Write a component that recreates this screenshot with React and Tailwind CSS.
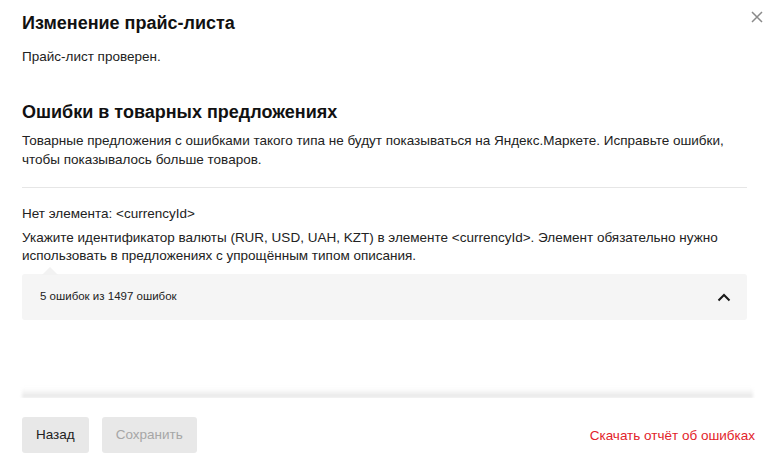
export default function App() {
  return (
    <div
      className="relative w-[773px] h-[468px] bg-white text-[#222] overflow-hidden"
      style={{ fontFamily: '"Liberation Sans", Arial, sans-serif' }}
    >
      <button className="absolute right-[10px] top-[11px] w-[12px] h-[12px] flex items-center justify-center">
        <svg width="12" height="12" viewBox="0 0 12 12">
          <path d="M1 1 L11 11 M11 1 L1 11" stroke="#8a8a8a" strokeWidth="1.5" />
        </svg>
      </button>

      <div className="h-[398px] flex flex-col">
        <div className="pl-[22px] pr-[26px] pt-[12px] flex-1">
          <h2 className="text-[18px] font-bold leading-[22px] text-[#111]">Изменение прайс-листа</h2>
          <p className="mt-[14px] text-[13.5px] leading-[18px]">Прайс-лист проверен.</p>

          <h3 className="mt-[35px] text-[18px] font-bold leading-[22px] text-[#111]">
            Ошибки в товарных предложениях
          </h3>
          <p className="mt-[8px] text-[13.5px] leading-[19px]">
            Товарные предложения с ошибками такого типа не будут показываться на Яндекс.Маркете. Исправьте ошибки,
            чтобы показывалось больше товаров.
          </p>

          <div className="mt-[18px] border-t border-[#e6e6e6]" />

          <div className="mt-[17px] text-[13.5px] leading-[18px]">Нет элемента: &lt;currencyId&gt;</div>
          <p className="mt-[6px] text-[13.5px] leading-[18px]">
            Укажите идентификатор валюты (RUR, USD, UAH, KZT) в элементе &lt;currencyId&gt;. Элемент обязательно нужно
            использовать в предложениях с упрощённым типом описания.
          </p>

          <div className="relative mt-[9px]">
            <svg className="absolute -top-[8px] left-[20px]" width="16" height="9" viewBox="0 0 16 9">
              <path d="M0 9 L8 1 L16 9 Z" fill="#f2f2f2" />
            </svg>
            <div className="h-[46px] rounded-[3px] bg-[#f5f5f5] pl-[18px] pr-[16px] flex items-center justify-between">
              <span className="text-[11.5px] text-[#222]">5 ошибок из 1497 ошибок</span>
              <svg width="14" height="9" viewBox="0 0 14 9">
                <path d="M1.5 7.5 L7 2 L12.5 7.5" fill="none" stroke="#1a1a1a" strokeWidth="2" />
              </svg>
            </div>
          </div>
        </div>
        <div className="ml-[22px] mr-[20px] h-[10px] bg-gradient-to-b from-transparent to-[#e4e4e4] blur-[1.5px]" />
      </div>

      <div className="relative bg-white px-[18px] pt-[19px] flex items-start justify-between">
        <div className="flex gap-[13px] pl-[4px]">
          <button className="h-[36px] px-[14px] rounded-[3px] bg-[#e8e8e8] text-[13.5px] text-[#222]">Назад</button>
          <button className="h-[36px] px-[14px] rounded-[3px] bg-[#e8e8e8] text-[13.5px] text-[#a6a6a6]">
            Сохранить
          </button>
        </div>
        <a className="mt-[9px] text-[13.5px] text-[#e2232b]">Скачать отчёт об ошибках</a>
      </div>
    </div>
  );
}
